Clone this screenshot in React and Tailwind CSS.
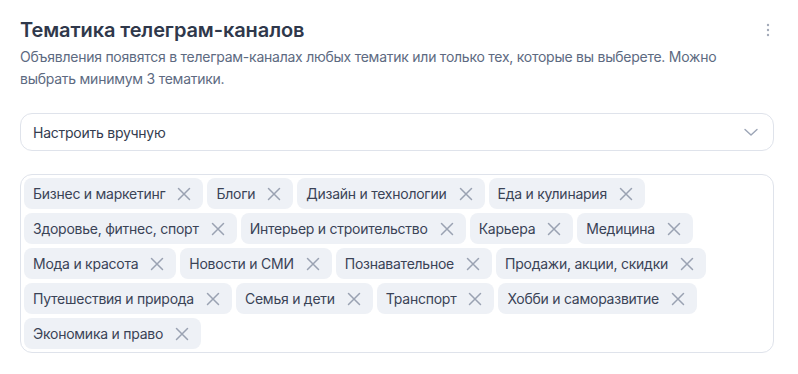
import { useState } from "react";

const initialTopics = [
  "Бизнес и маркетинг",
  "Блоги",
  "Дизайн и технологии",
  "Еда и кулинария",
  "Здоровье, фитнес, спорт",
  "Интерьер и строительство",
  "Карьера",
  "Медицина",
  "Мода и красота",
  "Новости и СМИ",
  "Познавательное",
  "Продажи, акции, скидки",
  "Путешествия и природа",
  "Семья и дети",
  "Транспорт",
  "Хобби и саморазвитие",
  "Экономика и право",
];

function CloseIcon() {
  return (
    <svg className="w-4 h-4" viewBox="0 0 16 16" fill="none" stroke="currentColor" strokeWidth={1.5} strokeLinecap="round">
      <path d="M2.5 2.5l11 11M13.5 2.5l-11 11" />
    </svg>
  );
}

export default function App() {
  const [topics, setTopics] = useState(initialTopics);

  const removeTopic = (name) => {
    setTopics(topics.filter((t) => t !== name));
  };

  return (
    <div className="w-[798px] h-[374px] bg-white pl-5 pr-6 pt-[15px] font-['Inter','Noto_Sans',sans-serif] tracking-[-0.25px]">
      <div className="flex items-start justify-between">
        <h1 className="text-[20px] leading-[30px] font-semibold text-[#2f384b] tracking-[-0.1px]">Тематика телеграм-каналов</h1>
        <button type="button" className="mt-[7px] mr-[4px] text-[#a3abb9]">
          <svg className="w-1 h-4" viewBox="0 0 4 16" fill="currentColor">
            <circle cx="2" cy="3" r="1.2" />
            <circle cx="2" cy="8" r="1.2" />
            <circle cx="2" cy="13" r="1.2" />
          </svg>
        </button>
      </div>
      <p className="mt-[1px] text-[14px] leading-[22px] text-[#5d6a81]">
        Объявления появятся в телеграм-каналах любых тематик или только тех, которые вы выберете. Можно выбрать минимум 3 тематики.
      </p>

      <button
        type="button"
        className="mt-[23px] w-full h-[38px] flex items-center justify-between border border-[#dfe3eb] rounded-[12px] pl-3 pr-[14px] text-[14px] text-[#333c4f]"
      >
        <span>Настроить вручную</span>
        <svg className="w-4 h-4 text-[#9ca5b6]" viewBox="0 0 16 16" fill="none" stroke="currentColor" strokeWidth={1.4} strokeLinecap="round" strokeLinejoin="round">
          <path d="M2 5.5l6 5.5 6-5.5" />
        </svg>
      </button>

      <div className="mt-[23px] w-full border border-[#dfe3eb] rounded-[12px] p-[3px] flex flex-wrap gap-1">
        {topics.map((t) => (
          <div key={t} className="h-[31px] flex items-center gap-[11px] bg-[#eef1f6] rounded-[8px] pl-[9px] pr-[11px] text-[14px] text-[#3a4356]">
            <span>{t}</span>
            <button type="button" onClick={() => removeTopic(t)} className="text-[#9aa2b2]">
              <CloseIcon />
            </button>
          </div>
        ))}
      </div>
    </div>
  );
}
